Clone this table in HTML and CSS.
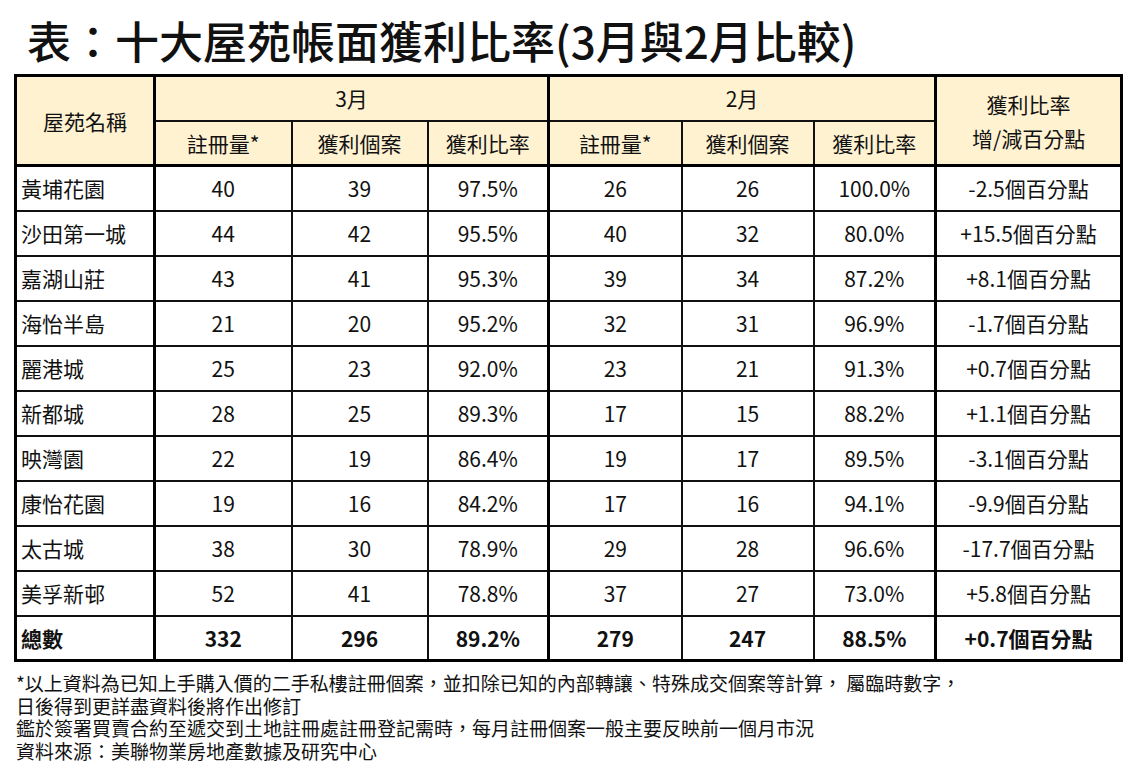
FILE: index.html
```html
<!DOCTYPE html>
<html lang="zh-Hant">
<head>
<meta charset="utf-8">
<link rel="stylesheet" href="styles.css">
</head>
<body>
<div class="page">
  <h1 class="title">表：十大屋苑帳面獲利比率(3月與2月比較)</h1>
  <table class="grid">
    <colgroup>
      <col class="c-name"><col class="c-a"><col class="c-b"><col class="c-c"><col class="c-d"><col class="c-e"><col class="c-f"><col class="c-g">
    </colgroup>
    <thead>
      <tr class="h1">
        <th rowspan="2" class="thick-r">屋苑名稱</th>
        <th colspan="3" class="thick-r">3月</th>
        <th colspan="3" class="thick-r">2月</th>
        <th rowspan="2">獲利比率<br>增/減百分點</th>
      </tr>
      <tr class="h2">
        <th>註冊量*</th><th>獲利個案</th><th class="thick-r">獲利比率</th>
        <th>註冊量*</th><th>獲利個案</th><th class="thick-r">獲利比率</th>
      </tr>
    </thead>
    <tbody>
      <tr><td class="name thick-r">黃埔花園</td><td>40</td><td>39</td><td class="thick-r">97.5%</td><td>26</td><td>26</td><td class="thick-r">100.0%</td><td>-2.5個百分點</td></tr>
      <tr><td class="name thick-r">沙田第一城</td><td>44</td><td>42</td><td class="thick-r">95.5%</td><td>40</td><td>32</td><td class="thick-r">80.0%</td><td>+15.5個百分點</td></tr>
      <tr><td class="name thick-r">嘉湖山莊</td><td>43</td><td>41</td><td class="thick-r">95.3%</td><td>39</td><td>34</td><td class="thick-r">87.2%</td><td>+8.1個百分點</td></tr>
      <tr><td class="name thick-r">海怡半島</td><td>21</td><td>20</td><td class="thick-r">95.2%</td><td>32</td><td>31</td><td class="thick-r">96.9%</td><td>-1.7個百分點</td></tr>
      <tr><td class="name thick-r">麗港城</td><td>25</td><td>23</td><td class="thick-r">92.0%</td><td>23</td><td>21</td><td class="thick-r">91.3%</td><td>+0.7個百分點</td></tr>
      <tr><td class="name thick-r">新都城</td><td>28</td><td>25</td><td class="thick-r">89.3%</td><td>17</td><td>15</td><td class="thick-r">88.2%</td><td>+1.1個百分點</td></tr>
      <tr><td class="name thick-r">映灣園</td><td>22</td><td>19</td><td class="thick-r">86.4%</td><td>19</td><td>17</td><td class="thick-r">89.5%</td><td>-3.1個百分點</td></tr>
      <tr><td class="name thick-r">康怡花園</td><td>19</td><td>16</td><td class="thick-r">84.2%</td><td>17</td><td>16</td><td class="thick-r">94.1%</td><td>-9.9個百分點</td></tr>
      <tr><td class="name thick-r">太古城</td><td>38</td><td>30</td><td class="thick-r">78.9%</td><td>29</td><td>28</td><td class="thick-r">96.6%</td><td>-17.7個百分點</td></tr>
      <tr><td class="name thick-r">美孚新邨</td><td>52</td><td>41</td><td class="thick-r">78.8%</td><td>37</td><td>27</td><td class="thick-r">73.0%</td><td>+5.8個百分點</td></tr>
      <tr class="total"><td class="name thick-r">總數</td><td>332</td><td>296</td><td class="thick-r">89.2%</td><td>279</td><td>247</td><td class="thick-r">88.5%</td><td>+0.7個百分點</td></tr>
    </tbody>
  </table>
  <div class="notes">
    <p>*以上資料為已知上手購入價的二手私樓註冊個案，並扣除已知的內部轉讓、特殊成交個案等計算， 屬臨時數字，</p>
    <p>日後得到更詳盡資料後將作出修訂</p>
    <p>鑑於簽署買賣合約至遞交到土地註冊處註冊登記需時，每月註冊個案一般主要反映前一個月市況</p>
    <p>資料來源：美聯物業房地產數據及研究中心</p>
  </div>
</div>
</body>
</html>
```
FILE: styles.css
```css
* { box-sizing: border-box; }
html, body { margin: 0; padding: 0; background: #fff; }
body {
  font-family: "Noto Sans CJK TC", "Noto Sans", sans-serif;
  color: #111;
  width: 1141px;
  height: 780px;
  overflow: hidden;
}
.page { padding: 0 0 0 14px; }
.title {
  margin: 0;
  padding: 10px 0 0 13px;
  height: 74px;
  font-size: 44px;
  line-height: 60px;
  font-weight: 500;
  letter-spacing: 0;
  color: #111;
  white-space: nowrap;
}
.grid {
  border-collapse: collapse;
  table-layout: fixed;
  width: 1106px;
  border: 3px solid #000;
  font-size: 21px;
}
.c-name { width: 139px; }
.c-a { width: 137px; }
.c-b { width: 136px; }
.c-c { width: 121px; }
.c-d { width: 133px; }
.c-e { width: 132px; }
.c-f { width: 122px; }
.c-g { width: 186px; }
th, td {
  border: 2px solid #111;
  padding: 0;
  text-align: center;
  font-weight: 400;
  height: 45px;
  line-height: 26px;
  white-space: nowrap;
}
th { background: #fff2d1; }
thead tr.h1 th { height: 45px; }
thead tr.h2 th { height: 45px; border-bottom: 3px solid #000; }
thead th[rowspan] { border-bottom: 3px solid #000; line-height: 34px; }
.thick-r { border-right: 3px solid #000; }
td.name { text-align: left; padding-left: 4px; }
tr.total td { font-weight: 700; }
.notes {
  padding: 10px 0 0 2px;
  font-size: 19px;
  line-height: 22.5px;
}
.notes p { margin: 0; white-space: nowrap; }
```
